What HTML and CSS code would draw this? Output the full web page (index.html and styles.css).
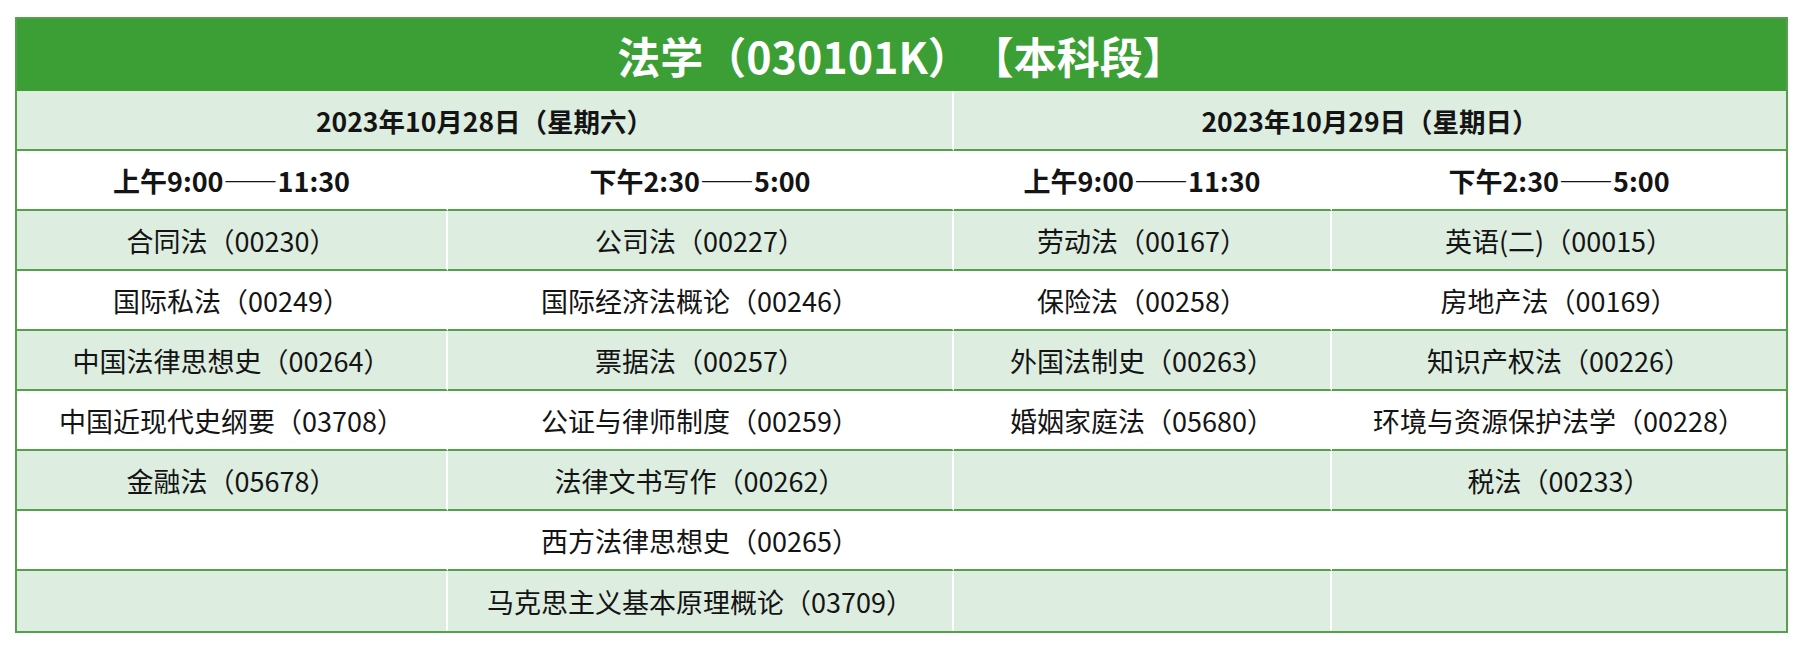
FILE: index.html
```html
<!DOCTYPE html>
<html lang="zh-CN">
<head>
<meta charset="utf-8">
<title>法学（030101K）【本科段】</title>
<link rel="stylesheet" href="styles.css">
</head>
<body>
<table class="schedule">
  <colgroup>
    <col class="c1"><col class="c2"><col class="c3"><col class="c4">
  </colgroup>
  <thead>
    <tr class="title-row"><th colspan="4" class="title">法学（030101K）【本科段】</th></tr>
    <tr class="row light date-row">
      <th colspan="2" class="sep">2023年10月28日（星期六）</th>
      <th colspan="2">2023年10月29日（星期日）</th>
    </tr>
    <tr class="row time-row">
      <th class="sep">上午9:00——11:30</th>
      <th class="sep">下午2:30——5:00</th>
      <th class="sep">上午9:00——11:30</th>
      <th>下午2:30——5:00</th>
    </tr>
  </thead>
  <tbody>
    <tr class="row light"><td class="sep">合同法（00230）</td><td class="sep">公司法（00227）</td><td class="sep">劳动法（00167）</td><td>英语(二)（00015）</td></tr>
    <tr class="row"><td class="sep">国际私法（00249）</td><td class="sep">国际经济法概论（00246）</td><td class="sep">保险法（00258）</td><td>房地产法（00169）</td></tr>
    <tr class="row light"><td class="sep">中国法律思想史（00264）</td><td class="sep">票据法（00257）</td><td class="sep">外国法制史（00263）</td><td>知识产权法（00226）</td></tr>
    <tr class="row"><td class="sep">中国近现代史纲要（03708）</td><td class="sep">公证与律师制度（00259）</td><td class="sep">婚姻家庭法（05680）</td><td>环境与资源保护法学（00228）</td></tr>
    <tr class="row light"><td class="sep">金融法（05678）</td><td class="sep">法律文书写作（00262）</td><td class="sep"></td><td>税法（00233）</td></tr>
    <tr class="row"><td class="sep"></td><td class="sep">西方法律思想史（00265）</td><td class="sep"></td><td></td></tr>
    <tr class="row light last"><td class="sep"></td><td class="sep">马克思主义基本原理概论（03709）</td><td class="sep"></td><td></td></tr>
  </tbody>
</table>
</body>
</html>
```
FILE: styles.css
```css
html, body {
  margin: 0;
  padding: 0;
  background: #ffffff;
}
body {
  padding: 17px 0 0 15px;
  font-family: "Noto Sans CJK SC", "Noto Sans", sans-serif;
  color: #141414;
  text-spacing-trim: space-all;
}
.schedule {
  table-layout: fixed;
  width: 1773px;
  border-collapse: separate;
  border-spacing: 0;
  border: 2px solid #55a04b;
}
.c1 { width: 431px; }
.c2 { width: 506px; }
.c3 { width: 378px; }
.c4 { width: 454px; }
.schedule th,
.schedule td {
  padding: 0;
  text-align: center;
  vertical-align: middle;
  white-space: nowrap;
}
.title-row { height: 72px; }
.title {
  background: #3b9f36;
  color: #ffffff;
  font-size: 43px;
  font-weight: 700;
  line-height: 1;
  padding-bottom: 3px;
}
.row { height: 60px; }
.row th,
.row td {
  border-bottom: 2px solid #55a04b;
  font-size: 27px;
}
.date-row th { font-size: 26.5px; }
.row.last td { border-bottom: none; }
.row th { font-weight: 700; }
.row td { font-weight: 400; }
.light { background: #ddede0; }
.sep { border-right: 2px solid #ffffff; }
```
